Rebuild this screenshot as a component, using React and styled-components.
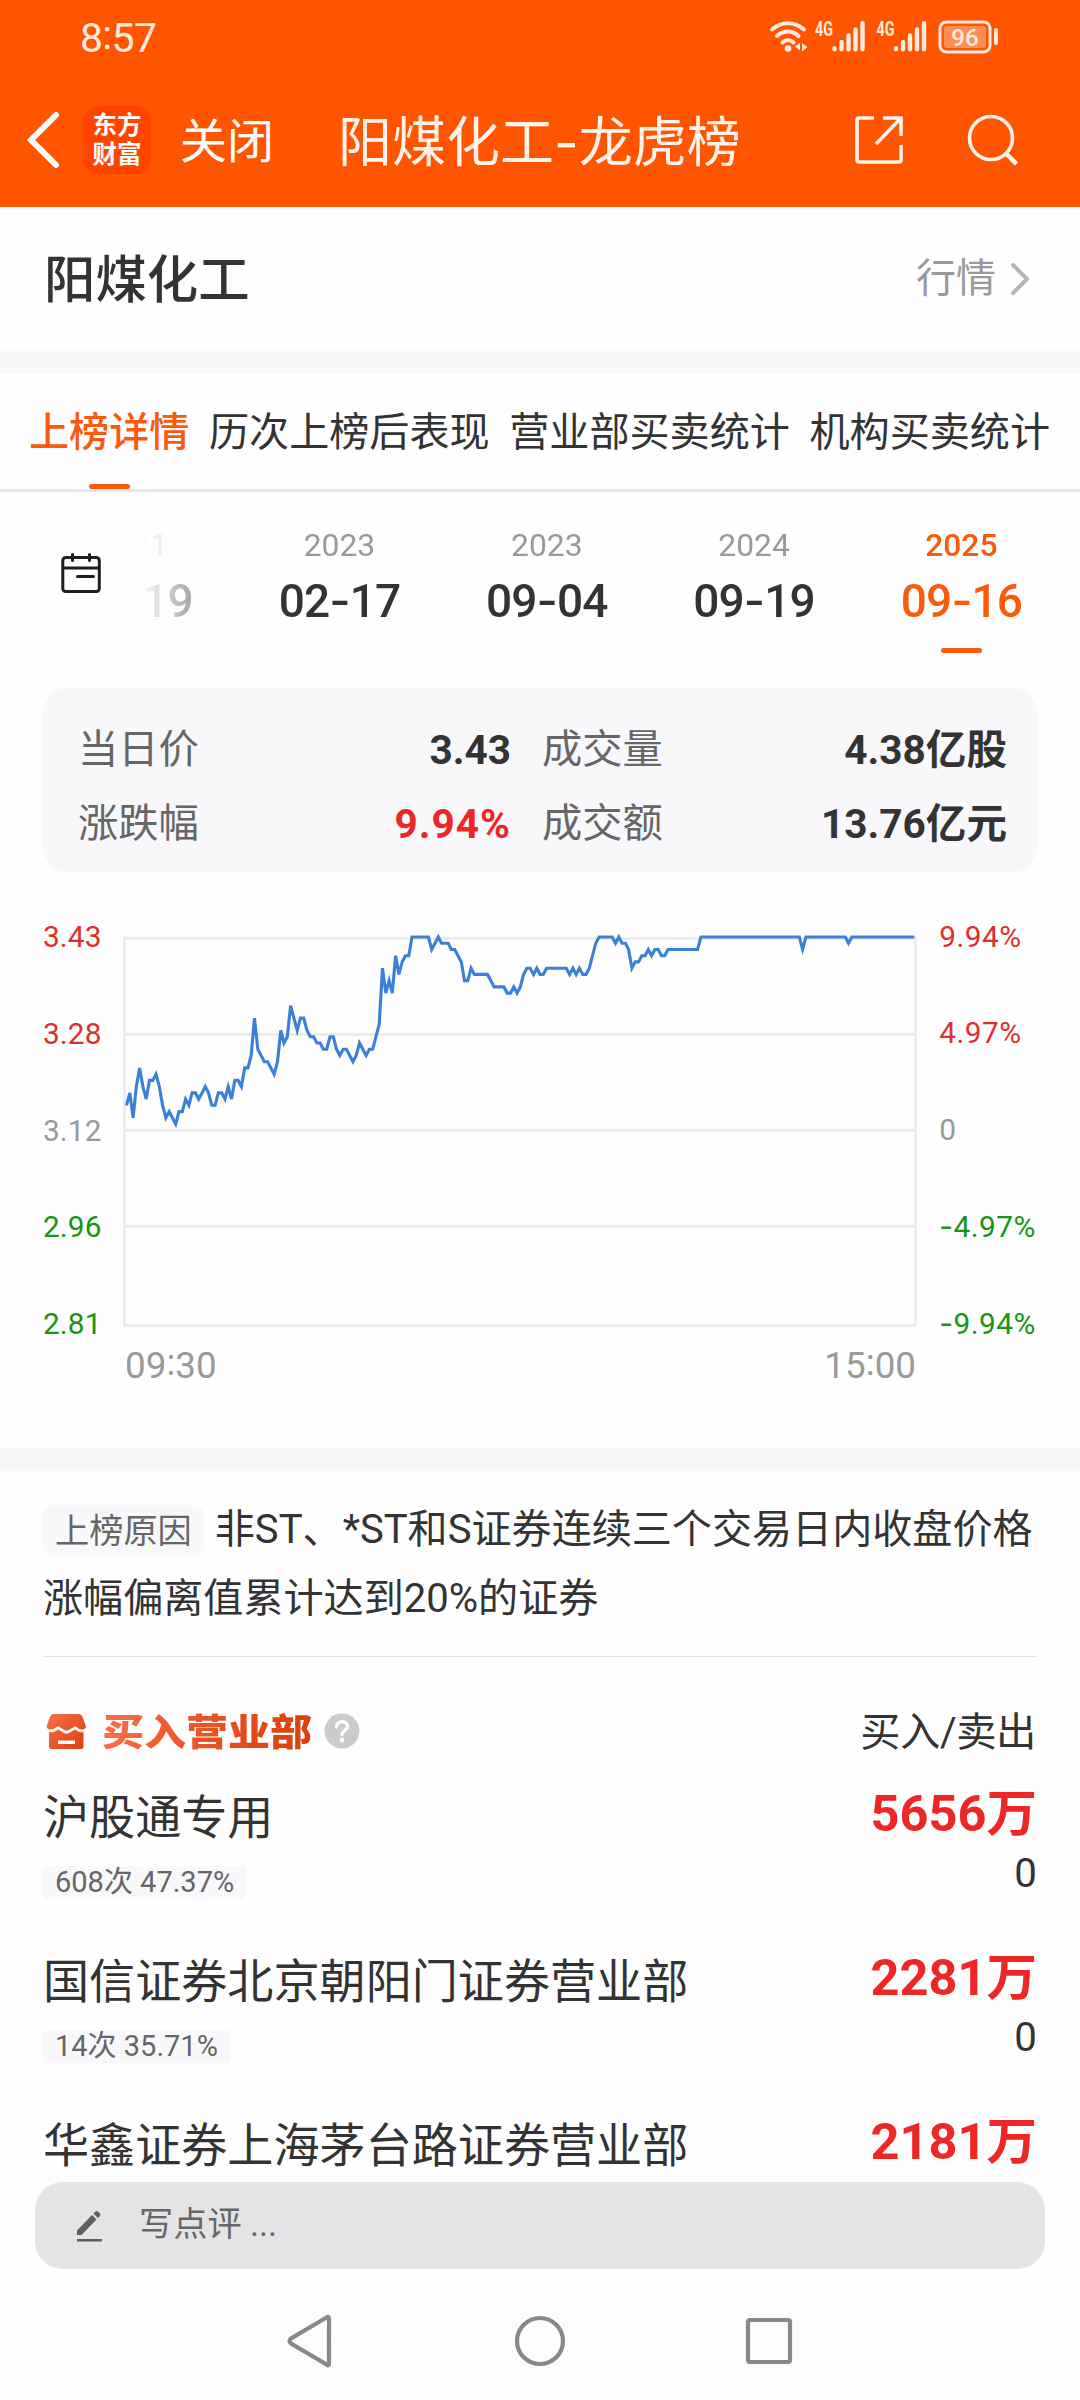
import React from "react";
import styled, { createGlobalStyle } from "styled-components";

const colors = {
  brand: "#ff5500",
  active: "#f95a0b",
  text: "#333333",
  label: "#666666",
  muted: "#999999",
  red: "#ee2726",
  rise: "#dc2f2d",
  fall: "#149614",
  panel: "#f8f8fb"
};

const GlobalStyle = createGlobalStyle`
  * {
    box-sizing: border-box;
  }

  body {
    margin: 0;
    background: #fefefe;
    color: ${colors.text};
    font-family: Roboto, "Noto Sans CJK SC", sans-serif;
  }
`;

const Page = styled.div`
  display: flex;
  flex-direction: column;
  width: 1080px;
  height: 2400px;
  overflow: hidden;
`;

/* Header */

const Header = styled.header`
  flex: none;
  height: 207px;
  background: ${colors.brand};
  color: #fff;
`;

const StatusBar = styled.div`
  display: flex;
  align-items: center;
  justify-content: space-between;
  height: 72px;
  padding: 1px 81px 0 80px;
  color: #ffeadd;
`;

const Clock = styled.span`
  padding-top: 2px;
  font-size: 41px;
  line-height: 50px;
  letter-spacing: -0.7px;
`;

const TitleBar = styled.div`
  display: flex;
  align-items: center;
  height: 135px;
  padding: 0 60px 0 25px;
`;

const Logo = styled.div`
  display: flex;
  flex-direction: column;
  align-items: center;
  justify-content: center;
  width: 68px;
  height: 68px;
  margin-left: 22px;
  padding-bottom: 3px;
  border-radius: 16px;
  background: #ff4400;
  font-family: "Noto Sans CJK SC", sans-serif;
  font-size: 24.5px;
  font-weight: 700;
  line-height: 29px;
`;

const CloseText = styled.span`
  margin: 4px 0 0 29px;
  font-size: 47px;
  line-height: 60px;
`;

const Title = styled.h1`
  flex: 1;
  margin: 7px 0 0 64px;
  color: #fff3ec;
  font-size: 54px;
  font-weight: 400;
  line-height: 66px;
`;

const HeaderIcons = styled.div`
  display: flex;
  align-items: center;
  gap: 62px;
`;

const Hyphen = styled.span`
  font-family: Inter, sans-serif;
`;

const Colon = styled.span`
  position: relative;
  top: -0.07em;
`;

/* Content */

const Main = styled.main`
  position: relative;
  flex: 1;
  min-height: 0;
  overflow: hidden;
`;

const Divider = styled.div`
  height: 23px;
  background: ${colors.panel};
`;

const StockBar = styled.div`
  display: flex;
  align-items: center;
  justify-content: space-between;
  height: 144px;
  padding: 0 50px 0 44px;
`;

const StockName = styled.h2`
  margin: 3px 0 0;
  font-size: 51.4px;
  font-weight: 500;
  line-height: 60px;
`;

const QuoteLink = styled.a`
  display: flex;
  align-items: center;
  gap: 14px;
  color: ${colors.muted};
  font-size: 40px;
  line-height: 50px;
`;

const Tabs = styled.nav`
  display: flex;
  justify-content: space-between;
  height: 118px;
  padding: 0 30px 0 29px;
  border-bottom: 3px solid #e8e8e8;
`;

const Tab = styled.div`
  display: flex;
  flex-direction: column;
  align-items: center;
  justify-content: space-between;
  padding-top: 35px;
  color: ${props => (props.$active ? colors.active : colors.text)};
  font-size: 40.1px;
  font-weight: ${props => (props.$active ? 500 : 400)};
  line-height: 48px;
`;

const Underline = styled.i`
  width: 41px;
  height: 5px;
  border-radius: 3px;
  background: ${colors.active};
`;

const DateBar = styled.div`
  display: flex;
  height: 196px;
  padding: 0 15px 0 60px;
`;

const CalendarButton = styled.div`
  flex: none;
  width: 80px;
  padding-top: 60px;
`;

const DateList = styled.div`
  display: flex;
  flex: 1;
  justify-content: flex-end;
  overflow: hidden;
  mask-image: linear-gradient(to right, transparent, #000 120px);
`;

const DateItem = styled.div`
  display: flex;
  flex: none;
  flex-direction: column;
  align-items: center;
  width: 207.3px;
  padding-top: 35px;
  color: ${props => (props.$active ? colors.active : colors.text)};

  .year {
    color: ${props => (props.$active ? "inherit" : colors.muted)};
    font-size: 31.8px;
    font-weight: ${props => (props.$active ? 500 : 400)};
    line-height: 36px;
  }

  .day {
    margin: 12px 0 22px;
    font-size: 46px;
    font-weight: 500;
    letter-spacing: -0.9px;
    line-height: 50px;
  }
`;

const Summary = styled.dl`
  display: grid;
  grid-template-columns: 433px 465px;
  column-gap: 31px;
  align-content: center;
  height: 184px;
  margin: 0 43px;
  padding: 13px 35px 0;
  border-radius: 24px;
  background: ${colors.panel};
`;

const SummaryItem = styled.div`
  display: flex;
  justify-content: space-between;
  font-size: 40.3px;
  line-height: 74px;

  dt {
    color: ${colors.label};
  }

  dd {
    margin: 0;
    color: ${props => (props.$up ? colors.red : colors.text)};
    font-size: 40.6px;
    font-weight: 700;
    letter-spacing: ${props => (props.$up ? "1px" : "0")};
  }
`;

/* Chart */

const ChartPanel = styled.section`
  height: 576px;
  padding: 48px 43px 0;
`;

const ChartRow = styled.div`
  display: flex;
`;

const Axis = styled.div`
  display: flex;
  flex-direction: column;
  justify-content: space-between;
  width: ${props => props.$width}px;
  height: 421px;
  font-size: 29.8px;
  letter-spacing: ${props => props.$spacing}px;
  line-height: 34px;
  white-space: nowrap;
`;

const AxisLabel = styled.span`
  color: ${props =>
    props.$sign > 0 ? colors.rise : props.$sign < 0 ? colors.fall : colors.muted};
`;

const Plot = styled.svg`
  flex: none;
  width: 796px;
  height: 396px;
  margin: 14px 21px 0 0;
`;

const TimeAxis = styled.div`
  display: flex;
  justify-content: space-between;
  padding: 4px 121px 0 82px;
  color: ${colors.muted};
  font-size: 36.8px;
  line-height: 42px;
`;

/* Reason and departments */

const Reason = styled.p`
  height: 186px;
  margin: 0 43px;
  padding-top: 24px;
  border-bottom: 1px solid #e3e3e3;
  font-size: 40.1px;
  line-height: 69px;
`;

const ReasonTag = styled.span`
  display: inline-block;
  height: 51px;
  margin-right: 11px;
  padding: 0 12px;
  border-radius: 11px;
  background: ${colors.panel};
  color: ${colors.label};
  font-size: 34.2px;
  line-height: 52px;
`;

const SectionHead = styled.div`
  display: flex;
  align-items: center;
  height: 50px;
  margin: 49px 44px 0 46px;
  font-size: 40.3px;
  line-height: 50px;

  .sides {
    margin: 3px 0 0 auto;
    letter-spacing: -0.4px;
  }
`;

const SectionTitle = styled.h3`
  margin: -2px 12px 0 15px;
  background: linear-gradient(100deg, #fb6f4b, #f0592c 35%, #d93f08);
  background-clip: text;
  color: transparent;
  font-family: "Noto Sans CJK SC", sans-serif;
  font-size: 42px;
  font-weight: 900;
  line-height: 50px;
  transform: scaleY(0.88);
`;

const DepartmentList = styled.ul`
  margin: 0;
  padding: 28px 0 0;
  list-style: none;
`;

const Department = styled.li`
  display: flex;
  justify-content: space-between;
  height: 164px;
  padding: 0 43px;
`;

const DepartmentName = styled.div`
  margin-bottom: 16px;
  padding-top: 2px;
  font-size: 46.1px;
  line-height: 64px;
`;

const CountTag = styled.span`
  display: block;
  width: max-content;
  height: 33px;
  padding: 0 12px;
  border-radius: 4px;
  background: ${colors.panel};
  color: ${colors.label};
  font-size: 29px;
  line-height: 32px;
`;

const Amounts = styled.div`
  text-align: right;

  .buy {
    color: ${colors.red};
    font-size: 50.5px;
    font-weight: 700;
    line-height: 59px;
  }

  .sell {
    font-size: 40.3px;
    line-height: 62px;
  }
`;

const CommentBox = styled.div`
  position: absolute;
  right: 35px;
  bottom: 13px;
  left: 35px;
  display: flex;
  align-items: center;
  gap: 36px;
  height: 87px;
  padding: 0 0 4px 41px;
  border-radius: 28px;
  background: #e4e4e6;
  color: ${colors.label};
  font-size: 34.2px;
  line-height: 44px;

  svg {
    margin-top: 4px;
  }
`;

const NavBar = styled.footer`
  display: flex;
  flex: none;
  align-items: center;
  justify-content: center;
  gap: 177px;
  height: 118px;
  padding-right: 2px;
  background: #fcfcfc;
`;

const tabs = ["上榜详情", "历次上榜后表现", "营业部买卖统计", "机构买卖统计"];

const dates = [
  { year: "2021", month: "11", day: "19" },
  { year: "2023", month: "02", day: "17" },
  { year: "2023", month: "09", day: "04" },
  { year: "2024", month: "09", day: "19" },
  { year: "2025", month: "09", day: "16" }
];

const summary = [
  { label: "当日价", value: "3.43" },
  { label: "成交量", value: "4.38亿股" },
  { label: "涨跌幅", value: "9.94%", up: true },
  { label: "成交额", value: "13.76亿元" }
];

const priceAxis = ["3.43", "3.28", "3.12", "2.96", "2.81"];
const rateAxis = ["9.94%", "4.97%", "0", "-4.97%", "-9.94%"];

const departments = [
  { name: "沪股通专用", tag: "608次 47.37%", buy: "5656万", sell: "0" },
  { name: "国信证券北京朝阳门证券营业部", tag: "14次 35.71%", buy: "2281万", sell: "0" },
  { name: "华鑫证券上海茅台路证券营业部", tag: "", buy: "2181万", sell: "" }
];

const hold = (price, minutes) => Array(minutes).fill(price);

// one price per minute, in cents
const prices = [
  316, 318, 314, 319, 322, 319, 317, 320, 320, 321, 319, 316, 314, 315, 314,
  313, 315, 315, 317, 316, 318, 318, 317, 318, 319, 318, 316, 316, 318, 318,
  317, 319, 317, 320, 320, 319, 322, 322, 324, 330, 325, 324, 323, 323, 322,
  321, 323, 328, 326, 327, 332, 330, 328, 330, 330, 328, 327, 327, 326, 326,
  325, 325, 327, 327, 325, 324, 325, 325, 324, 323, 324, 326, 325, 324, 325,
  325, 327, 329, 338, 334, 336, 334, 340, 337, 339, 340, 340,
  ...hold(343, 6), 341, 342, 343, 342, 342, 342, 341, 341, 340, 339, 336, 336,
  338, ...hold(337, 5), 336, ...hold(335, 4), 334, 334, 335, 334, 335, 337,
  338, 338, 337, 338, 337, 337, ...hold(338, 7), 337, 338, 337, 338, 337, 337,
  338, 340, 342, ...hold(343, 5), 342, 343, 342, 342, 341, 338, 339, 339, 340,
  340, 341, 340, 341, 341, 340, 340, ...hold(341, 10), ...hold(343, 31), 341,
  ...hold(343, 13), 342, ...hold(343, 20)
];

const linePoints = prices
  .map((p, i) => `${(4.5 + i * 3.282).toFixed(1)},${(3 + (343 - p) * 6.235).toFixed(1)}`)
  .join(" ");

// the font's own hyphen is too short and its colon too low next to figures
const Figures = ({ children }) =>
  children.split(/([-:])/).map((part, i) => {
    if (part === "-") return <Hyphen key={i}>-</Hyphen>;
    if (part === ":") return <Colon key={i}>:</Colon>;
    return part;
  });

const SignalBars = ({ x }) => (
  <path
    d={`M${x} 28.3v.9M${x + 7} 22v7.2M${x + 14} 15.5v13.7M${x + 21} 9.5v19.7M${x + 28} 3.2v26`}
    stroke="currentColor"
    strokeWidth="4.4"
    strokeLinecap="round"
  />
);

const StatusIcons = () => (
  <svg width="230" height="34" viewBox="0 0 230 34" fill="none" overflow="visible">
    <g stroke="currentColor" strokeWidth="4" strokeLinecap="round">
      <path d="M3 9.5C12 1 26 1 35 9.5" />
      <path d="M8 16C14.5 10 23.5 10 29.5 16" />
      <path d="M13.5 22.5C17 19.5 21.5 19.5 24.5 22.5" />
    </g>
    <circle cx="19" cy="28.5" r="3.3" fill="currentColor" />
    <path d="M31 22.5v8l-5-4zM33 23v8.5l5.5-4.5z" fill="currentColor" />
    <g fill="currentColor" fontFamily="Roboto, sans-serif" fontWeight="700" fontSize="19.5">
      <text x="46" y="15.5" textLength="18" lengthAdjust="spacingAndGlyphs">4G</text>
      <text x="107.5" y="15.5" textLength="18" lengthAdjust="spacingAndGlyphs">4G</text>
    </g>
    <SignalBars x={65.5} />
    <SignalBars x={127} />
    <rect x="171" y="2" width="50" height="30" rx="6.5" stroke="currentColor" strokeWidth="3" />
    <rect x="175" y="6" width="42" height="22" rx="3" fill="currentColor" opacity="0.38" />
    <path d="M227 10v13" stroke="currentColor" strokeWidth="4" strokeLinecap="round" />
    <text x="196" y="25.5" fill="currentColor" fontFamily="Roboto, sans-serif" fontWeight="500" fontSize="24" textAnchor="middle">
      96
    </text>
  </svg>
);

const BackIcon = () => (
  <svg width="36" height="58" viewBox="0 0 36 58" fill="none" stroke="#fff" strokeWidth="6">
    <path d="M31 4 6 29l25 25" strokeLinecap="round" />
  </svg>
);

const ShareIcon = () => (
  <svg width="50" height="50" viewBox="0 0 50 50" fill="none" stroke="#fff3ec" strokeWidth="3.6">
    <path d="M20 3H5a2 2 0 0 0-2 2v40a2 2 0 0 0 2 2h40a2 2 0 0 0 2-2V30" />
    <path d="M29 3h18v18M46 4 22 29" />
  </svg>
);

const SearchIcon = () => (
  <svg width="54" height="54" viewBox="0 0 54 54" fill="none" stroke="#fff3ec" strokeWidth="3.6">
    <circle cx="25" cy="25" r="21.5" />
    <path d="m39.5 40 11 11" strokeWidth="4.5" />
  </svg>
);

const ChevronIcon = () => (
  <svg width="20" height="34" viewBox="0 0 20 34" fill="none" stroke="#b5b5b5" strokeWidth="4">
    <path d="m3 3 14 14L3 31" strokeLinecap="round" strokeLinejoin="round" />
  </svg>
);

const CalendarIcon = () => (
  <svg width="42" height="42" viewBox="0 0 42 42" fill="none" stroke="#1c1e1f" strokeWidth="3">
    <rect x="2.8" y="5.5" width="36.5" height="34" rx="3" />
    <path d="M3 16h36M12.5 2.5v6M29.5 2.5v6M17.5 24.5h16" strokeLinecap="round" />
  </svg>
);

const ShopIcon = () => (
  <svg width="41" height="37" viewBox="0 0 41 37">
    <defs>
      <linearGradient id="shop" gradientUnits="userSpaceOnUse" x1="0" y1="0" x2="41" y2="37">
        <stop offset="0" stopColor="#fb6f4b" />
        <stop offset="1" stopColor="#d93f08" />
      </linearGradient>
    </defs>
    <path
      fill="url(#shop)"
      d="M7.500 1h25q3 0 4 3l3 8q1.500 4-3 4.500-4 0-7-3.200l-7 3.700q-2 1-4 0l-6.500-3.700q-4 3.200-8 3.200-4-.5-3-4.500l3-8q1-3 3.500-3z"
    />
    <path
      fill="url(#shop)"
      fillRule="evenodd"
      d="M3 19q5 1 9-2.500l6 3.500q2.500 1 5 0l6-3.500q4 3.500 8.500 2.500v14.500q0 2.500-2.500 2.500H5.500q-2.500 0-2.500-2.500zM12 27.500v3.500h17v-3.500z"
    />
  </svg>
);

const HelpIcon = () => (
  <svg width="36" height="36" viewBox="0 0 36 36" fill="none">
    <circle cx="18" cy="18" r="17.5" fill="#cbcbcb" />
    <path d="M12.5 14c0-7 11-7 11-.5 0 4-5.5 4-5.5 8" stroke="#fff" strokeWidth="3.4" strokeLinecap="round" />
    <circle cx="18" cy="27" r="2.4" fill="#fff" />
  </svg>
);

const PencilIcon = () => (
  <svg width="27" height="34" viewBox="0 0 27 34" fill="#5f5f5f">
    <path d="M1 26v-4.500L16 6l4.500 4.500L5.500 26zM17.500 4.500l2-2q1.500-1 2.500 0l2 2q1 1 0 2.500l-2 2z" />
    <path d="M1 30h25v2.500H1z" />
  </svg>
);

const NavIcons = () => (
  <>
    <svg width="52" height="54" viewBox="0 0 52 54" fill="none" stroke="#888" strokeWidth="4.2">
      <path d="M45 4.5v45q0 3-2.5 1L7 29.5q-3-2.5 0-5L42.5 3.5Q45 2 45 4.5z" />
    </svg>
    <svg width="54" height="54" viewBox="0 0 54 54" fill="none" stroke="#888" strokeWidth="4.2">
      <circle cx="27" cy="27" r="23" />
    </svg>
    <svg width="50" height="50" viewBox="0 0 50 50" fill="none" stroke="#888" strokeWidth="4.2">
      <rect x="4" y="4" width="42" height="42" rx="2" />
    </svg>
  </>
);

const PriceChart = () => (
  <ChartPanel>
    <ChartRow>
      <Axis $width={81} $spacing={0.1}>
        {priceAxis.map((value, i) => (
          <AxisLabel key={value} $sign={2 - i}>
            {value}
          </AxisLabel>
        ))}
      </Axis>
      <Plot viewBox="0 0 796 396" fill="none">
        <path
          d="M2.5 2v389M793.5 2v389M1 4.5h793M1 100.5h793M1 196.5h793M1 292.5h793M1 391.5h793"
          stroke="#ececec"
          strokeWidth="3"
        />
        <polyline points={linePoints} stroke="#3a80d8" strokeWidth="3.1" />
      </Plot>
      <Axis $width={100} $spacing={0.5}>
        {rateAxis.map((value, i) => (
          <AxisLabel key={value} $sign={2 - i}>
            <Figures>{value}</Figures>
          </AxisLabel>
        ))}
      </Axis>
    </ChartRow>
    <TimeAxis>
      <span><Figures>09:30</Figures></span>
      <span><Figures>15:00</Figures></span>
    </TimeAxis>
  </ChartPanel>
);

export default function App() {
  return (
    <Page>
      <GlobalStyle />
      <Header>
        <StatusBar>
          <Clock><Figures>8:57</Figures></Clock>
          <StatusIcons />
        </StatusBar>
        <TitleBar>
          <BackIcon />
          <Logo>
            <span>东方</span>
            <span>财富</span>
          </Logo>
          <CloseText>关闭</CloseText>
          <Title><Figures>阳煤化工-龙虎榜</Figures></Title>
          <HeaderIcons>
            <ShareIcon />
            <SearchIcon />
          </HeaderIcons>
        </TitleBar>
      </Header>
      <Main>
        <StockBar>
          <StockName>阳煤化工</StockName>
          <QuoteLink>
            行情
            <ChevronIcon />
          </QuoteLink>
        </StockBar>
        <Divider />
        <Tabs>
          {tabs.map((tab, i) => (
            <Tab key={tab} $active={i === 0}>
              {tab}
              {i === 0 && <Underline />}
            </Tab>
          ))}
        </Tabs>
        <DateBar>
          <CalendarButton>
            <CalendarIcon />
          </CalendarButton>
          <DateList>
            {dates.map((date, i) => {
              const active = i === dates.length - 1;
              return (
                <DateItem key={i} $active={active}>
                  <span className="year">{date.year}</span>
                  <span className="day">
                    <Figures>{`${date.month}-${date.day}`}</Figures>
                  </span>
                  {active && <Underline />}
                </DateItem>
              );
            })}
          </DateList>
        </DateBar>
        <Summary>
          {summary.map(item => (
            <SummaryItem key={item.label} $up={item.up}>
              <dt>{item.label}</dt>
              <dd>{item.value}</dd>
            </SummaryItem>
          ))}
        </Summary>
        <PriceChart />
        <Divider />
        <Reason>
          <ReasonTag>上榜原因</ReasonTag>
          非ST、*ST和S证券连续三个交易日内收盘价格涨幅偏离值累计达到20%的证券
        </Reason>
        <SectionHead>
          <ShopIcon />
          <SectionTitle>买入营业部</SectionTitle>
          <HelpIcon />
          <span className="sides">买入/卖出</span>
        </SectionHead>
        <DepartmentList>
          {departments.map(item => (
            <Department key={item.name}>
              <div>
                <DepartmentName>{item.name}</DepartmentName>
                {item.tag && <CountTag>{item.tag}</CountTag>}
              </div>
              <Amounts>
                <div className="buy">{item.buy}</div>
                <div className="sell">{item.sell}</div>
              </Amounts>
            </Department>
          ))}
        </DepartmentList>
        <CommentBox>
          <PencilIcon />
          写点评 ...
        </CommentBox>
      </Main>
      <NavBar>
        <NavIcons />
      </NavBar>
    </Page>
  );
}
